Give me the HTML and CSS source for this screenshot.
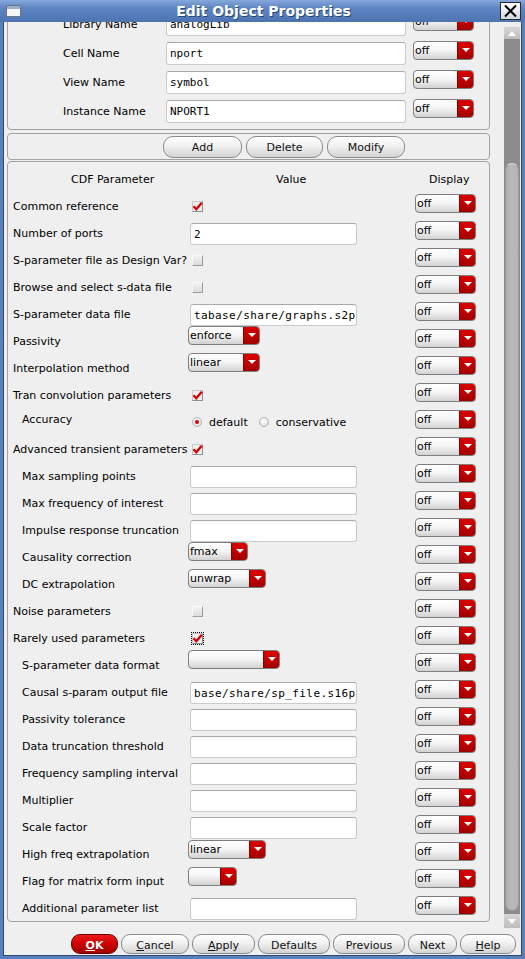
FILE: index.html
```html
<!DOCTYPE html>
<html>
<head>
<meta charset="utf-8">
<title>Edit Object Properties</title>
<link rel="stylesheet" href="styles.css">
</head>
<body>
<div class="window">
  <div class="titlebar">
    <span class="winicon">
      <svg width="15" height="12" viewBox="0 0 15 12"><rect x="0.5" y="0.5" width="14" height="11" fill="#f4f6f9" stroke="#6b7688"/><rect x="1" y="1" width="13" height="3" fill="#9aaecb"/></svg>
    </span>
    <span class="title">Edit Object Properties</span>
    <span class="closebtn">
      <svg width="21" height="18" viewBox="0 0 21 18"><defs><linearGradient id="cg" x1="0" y1="0" x2="0" y2="1"><stop offset="0" stop-color="#ffffff"/><stop offset="1" stop-color="#cfd6df"/></linearGradient></defs><rect x="0.5" y="0.5" width="20" height="17" fill="url(#cg)" stroke="#2b2b2b"/><path d="M5 3.5 L16 14.5 M16 3.5 L5 14.5" stroke="#000" stroke-width="2"/></svg>
    </span>
  </div>
  <div class="client">
    <div class="main">
      <div class="view">
        <div class="content">
          <section class="panel top-panel">
            <div class="trow"><span class="tlabel">Library Name</span><span class="field tfield">analogLib</span><span class="dd dd-disp"><span class="dd-text">off</span><span class="dd-arrow"></span></span></div>
            <div class="trow"><span class="tlabel">Cell Name</span><span class="field tfield">nport</span><span class="dd dd-disp"><span class="dd-text">off</span><span class="dd-arrow"></span></span></div>
            <div class="trow"><span class="tlabel">View Name</span><span class="field tfield">symbol</span><span class="dd dd-disp"><span class="dd-text">off</span><span class="dd-arrow"></span></span></div>
            <div class="trow"><span class="tlabel">Instance Name</span><span class="field tfield">NPORT1</span><span class="dd dd-disp"><span class="dd-text">off</span><span class="dd-arrow"></span></span></div>
          </section>
          <section class="panel btn-panel">
            <button class="btn btn-add">Add</button>
            <button class="btn btn-delete">Delete</button>
            <button class="btn btn-modify">Modify</button>
          </section>
          <section class="panel cdf-panel">
            <div class="crow head">
              <span class="h-param">CDF Parameter</span>
              <span class="h-value">Value</span>
              <span class="h-display">Display</span>
            </div>

            <div class="crow"><span class="clabel">Common reference</span><span class="cval"><span class="cb cb-on"><svg width="11" height="11" viewBox="0 0 11 11"><path d="M1.5 5.2 L4.3 8.2 L9.8 1.8" fill="none" stroke="#d60000" stroke-width="2.4"/></svg></span></span><span class="dd dd-disp"><span class="dd-text">off</span><span class="dd-arrow"></span></span></div>

            <div class="crow"><span class="clabel">Number of ports</span><span class="cval"><span class="field cfield">2</span></span><span class="dd dd-disp"><span class="dd-text">off</span><span class="dd-arrow"></span></span></div>

            <div class="crow"><span class="clabel">S-parameter file as Design Var?</span><span class="cval"><span class="cb"></span></span><span class="dd dd-disp"><span class="dd-text">off</span><span class="dd-arrow"></span></span></div>

            <div class="crow"><span class="clabel">Browse and select s-data file</span><span class="cval"><span class="cb"></span></span><span class="dd dd-disp"><span class="dd-text">off</span><span class="dd-arrow"></span></span></div>

            <div class="crow"><span class="clabel">S-parameter data file</span><span class="cval"><span class="field cfield path">tabase/share/graphs.s2p</span></span><span class="dd dd-disp"><span class="dd-text">off</span><span class="dd-arrow"></span></span></div>

            <div class="crow"><span class="clabel">Passivity</span><span class="cval"><span class="dd dd-val w-enforce"><span class="dd-text">enforce</span><span class="dd-arrow"></span></span></span><span class="dd dd-disp"><span class="dd-text">off</span><span class="dd-arrow"></span></span></div>

            <div class="crow"><span class="clabel">Interpolation method</span><span class="cval"><span class="dd dd-val w-enforce"><span class="dd-text">linear</span><span class="dd-arrow"></span></span></span><span class="dd dd-disp"><span class="dd-text">off</span><span class="dd-arrow"></span></span></div>

            <div class="crow"><span class="clabel">Tran convolution parameters</span><span class="cval"><span class="cb cb-on"><svg width="11" height="11" viewBox="0 0 11 11"><path d="M1.5 5.2 L4.3 8.2 L9.8 1.8" fill="none" stroke="#d60000" stroke-width="2.4"/></svg></span></span><span class="dd dd-disp"><span class="dd-text">off</span><span class="dd-arrow"></span></span></div>

            <div class="crow"><span class="clabel ind flat">Accuracy</span><span class="cval radios"><span class="radio on"></span><span class="rtext">default</span><span class="radio"></span><span class="rtext">conservative</span></span><span class="dd dd-disp"><span class="dd-text">off</span><span class="dd-arrow"></span></span></div>

            <div class="crow"><span class="clabel">Advanced transient parameters</span><span class="cval cval-tight"><span class="cb cb-on"><svg width="11" height="11" viewBox="0 0 11 11"><path d="M1.5 5.2 L4.3 8.2 L9.8 1.8" fill="none" stroke="#d60000" stroke-width="2.4"/></svg></span></span><span class="dd dd-disp"><span class="dd-text">off</span><span class="dd-arrow"></span></span></div>

            <div class="crow"><span class="clabel ind">Max sampling points</span><span class="cval"><span class="field cfield"></span></span><span class="dd dd-disp"><span class="dd-text">off</span><span class="dd-arrow"></span></span></div>

            <div class="crow"><span class="clabel ind">Max frequency of interest</span><span class="cval"><span class="field cfield"></span></span><span class="dd dd-disp"><span class="dd-text">off</span><span class="dd-arrow"></span></span></div>

            <div class="crow"><span class="clabel ind">Impulse response truncation</span><span class="cval"><span class="field cfield"></span></span><span class="dd dd-disp"><span class="dd-text">off</span><span class="dd-arrow"></span></span></div>

            <div class="crow"><span class="clabel ind">Causality correction</span><span class="cval"><span class="dd dd-val w-fmax"><span class="dd-text">fmax</span><span class="dd-arrow"></span></span></span><span class="dd dd-disp"><span class="dd-text">off</span><span class="dd-arrow"></span></span></div>

            <div class="crow"><span class="clabel ind">DC extrapolation</span><span class="cval"><span class="dd dd-val w-unwrap"><span class="dd-text">unwrap</span><span class="dd-arrow"></span></span></span><span class="dd dd-disp"><span class="dd-text">off</span><span class="dd-arrow"></span></span></div>

            <div class="crow"><span class="clabel">Noise parameters</span><span class="cval"><span class="cb"></span></span><span class="dd dd-disp"><span class="dd-text">off</span><span class="dd-arrow"></span></span></div>

            <div class="crow"><span class="clabel">Rarely used parameters</span><span class="cval"><span class="cb cb-on cb-focus"><svg width="11" height="11" viewBox="0 0 11 11"><path d="M1.5 5.2 L4.3 8.2 L9.8 1.8" fill="none" stroke="#d60000" stroke-width="2.4"/></svg></span></span><span class="dd dd-disp"><span class="dd-text">off</span><span class="dd-arrow"></span></span></div>

            <div class="crow"><span class="clabel ind">S-parameter data format</span><span class="cval"><span class="dd dd-val w-format"><span class="dd-text"></span><span class="dd-arrow"></span></span></span><span class="dd dd-disp"><span class="dd-text">off</span><span class="dd-arrow"></span></span></div>

            <div class="crow"><span class="clabel ind">Causal s-param output file</span><span class="cval"><span class="field cfield path">base/share/sp_file.s16p</span></span><span class="dd dd-disp"><span class="dd-text">off</span><span class="dd-arrow"></span></span></div>

            <div class="crow"><span class="clabel ind">Passivity tolerance</span><span class="cval"><span class="field cfield"></span></span><span class="dd dd-disp"><span class="dd-text">off</span><span class="dd-arrow"></span></span></div>

            <div class="crow"><span class="clabel ind">Data truncation threshold</span><span class="cval"><span class="field cfield"></span></span><span class="dd dd-disp"><span class="dd-text">off</span><span class="dd-arrow"></span></span></div>

            <div class="crow"><span class="clabel ind">Frequency sampling interval</span><span class="cval"><span class="field cfield"></span></span><span class="dd dd-disp"><span class="dd-text">off</span><span class="dd-arrow"></span></span></div>

            <div class="crow"><span class="clabel ind">Multiplier</span><span class="cval"><span class="field cfield"></span></span><span class="dd dd-disp"><span class="dd-text">off</span><span class="dd-arrow"></span></span></div>

            <div class="crow"><span class="clabel ind">Scale factor</span><span class="cval"><span class="field cfield"></span></span><span class="dd dd-disp"><span class="dd-text">off</span><span class="dd-arrow"></span></span></div>

            <div class="crow"><span class="clabel ind">High freq extrapolation</span><span class="cval"><span class="dd dd-val w-unwrap low"><span class="dd-text">linear</span><span class="dd-arrow"></span></span></span><span class="dd dd-disp"><span class="dd-text">off</span><span class="dd-arrow"></span></span></div>

            <div class="crow"><span class="clabel ind">Flag for matrix form input</span><span class="cval"><span class="dd dd-val w-flag low"><span class="dd-text"></span><span class="dd-arrow"></span></span></span><span class="dd dd-disp"><span class="dd-text">off</span><span class="dd-arrow"></span></span></div>

            <div class="crow"><span class="clabel ind">Additional parameter list</span><span class="cval"><span class="field cfield"></span></span><span class="dd dd-disp"><span class="dd-text">off</span><span class="dd-arrow"></span></span></div>
          </section>
        </div>
      </div>
      <div class="scrollbar">
        <div class="sb-btn sb-up"><span class="tri-up"></span></div>
        <div class="sb-track"><div class="sb-thumb"></div></div>
        <div class="sb-btn sb-down"><span class="tri-down"></span></div>
      </div>
    </div>
    <div class="buttonbar">
      <button class="btn bb bb-ok"><u>O</u>K</button>
      <button class="btn bb bb-cancel"><u>C</u>ancel</button>
      <button class="btn bb bb-apply"><u>A</u>pply</button>
      <button class="btn bb bb-defaults">Defaults</button>
      <button class="btn bb bb-previous">Previous</button>
      <button class="btn bb bb-next">Next</button>
      <button class="btn bb bb-help"><u>H</u>elp</button>
    </div>
  </div>
</div>
</body>
</html>
```
FILE: styles.css
```css
html, body {
  margin: 0;
  padding: 0;
}
body {
  width: 525px;
  height: 959px;
  overflow: hidden;
  font-family: "DejaVu Sans", "Liberation Sans", sans-serif;
  font-size: 11px;
  color: #000;
}
.window {
  width: 525px;
  height: 959px;
  display: flex;
  flex-direction: column;
  background: #5a80bc;
}
.titlebar {
  height: 22px;
  flex: none;
  position: relative;
  display: flex;
  align-items: center;
  justify-content: center;
  background: linear-gradient(to bottom, #86a9dc 0%, #5f86c2 35%, #4d74b1 100%);
}
.winicon {
  position: absolute;
  left: 6px;
  top: 5px;
  width: 15px;
  height: 12px;
  display: block;
}
.winicon svg, .closebtn svg { display: block; }
.title {
  color: #fff;
  font-weight: bold;
  font-size: 14px;
  line-height: 22px;
  text-shadow: 1px 1px 0 #27467a;
  padding-left: 2px;
}
.closebtn {
  position: absolute;
  left: 500px;
  top: 2px;
  width: 21px;
  height: 18px;
}
.client {
  flex: 1;
  display: flex;
  flex-direction: column;
  margin: 0 3px 3px 3px;
  border-left: 1px solid #2b4877;
  border-right: 1px solid #2b4877;
  border-bottom: 1px solid #2b4877;
  background: #efefef;
  min-height: 0;
}
.main {
  height: 908px;
  flex: none;
  display: flex;
}
.view {
  width: 499px;
  height: 908px;
  overflow: hidden;
  padding-left: 3px;
  box-sizing: border-box;
}
.content {
  margin-top: -17px;
  width: 483px;
}
.panel {
  border: 1px solid #a2a2a2;
  border-radius: 4px;
  background: #efefef;
}
.top-panel {
  padding: 4px 0 3px 0;
}
.trow {
  height: 29px;
  display: flex;
  align-items: flex-start;
}
.tlabel {
  width: 158px;
  box-sizing: border-box;
  padding-left: 55px;
  line-height: 30px;
  white-space: nowrap;
}
.field {
  display: block;
  box-sizing: border-box;
  background: #fff;
  border: 1px solid #cacaca;
  border-top-color: #a9a9a9;
  border-radius: 3px;
  font-family: "DejaVu Sans Mono", "Liberation Mono", monospace;
  font-size: 11px;
  padding-left: 3px;
  white-space: nowrap;
  overflow: hidden;
}
.tfield {
  width: 240px;
  height: 23px;
  line-height: 22px;
  margin-top: 3px;
  margin-right: 7px;
}
.cfield {
  width: 167px;
  height: 22px;
  line-height: 21px;
  margin-left: 2px;
  margin-top: 6px;
}
.cfield.path { letter-spacing: 0.4px; }

.dd {
  display: flex;
  height: 19px;
  box-sizing: border-box;
  border: 1px solid #7e7e7e;
  border-radius: 4px;
  overflow: hidden;
  background: linear-gradient(to bottom, #ffffff 0%, #f6f6f6 45%, #d2d2d2 100%);
}
.dd-text {
  flex: 1;
  padding-left: 1px;
  line-height: 18px;
  white-space: nowrap;
  overflow: hidden;
}
.dd-arrow {
  width: 16px;
  flex: none;
  display: flex;
  align-items: center;
  justify-content: center;
  padding-bottom: 2px;
  box-sizing: border-box;
  background: linear-gradient(to bottom, #dc0000 0%, #c20000 50%, #a00000 100%);
  border-left: 1px solid #8c0000;
}
.dd-arrow::after {
  content: "";
  width: 0;
  height: 0;
  border-left: 4px solid transparent;
  border-right: 4px solid transparent;
  border-top: 4px solid #fff;
}
.dd-disp {
  width: 61px;
  margin-top: 4px;
}
.trow .dd-disp {
  margin-top: 2px;
}
.dd-val { margin-top: 1px; }
.dd-val.low { margin-top: 2px; }
.w-enforce { width: 72px; }
.w-fmax { width: 60px; }
.w-unwrap { width: 78px; }
.w-format { width: 92px; }
.w-flag { width: 49px; }

.btn-panel {
  margin-top: 3px;
  padding: 2px 0 1px 155px;
  display: flex;
  gap: 4px;
}
.btn {
  box-sizing: border-box;
  height: 22px;
  padding: 0;
  margin: 0;
  border: 1px solid #8b8b8b;
  border-radius: 10px;
  background: linear-gradient(to bottom, #ffffff 0%, #f1f1f1 45%, #d3d3d3 100%);
  font-family: "DejaVu Sans", "Liberation Sans", sans-serif;
  font-size: 11px;
  color: #111;
  display: flex;
  align-items: center;
  justify-content: center;
  line-height: 1;
  padding-top: 1px;
}
.btn-add { width: 79px; }
.btn-delete { width: 77px; }
.btn-modify { width: 78px; }

.cdf-panel {
  margin-top: 1px;
  padding-bottom: 2px;
}
.crow {
  height: 27px;
  display: flex;
  align-items: flex-start;
}
.crow.head {
  height: 28px;
}
.h-param, .h-value, .h-display {
  display: block;
  box-sizing: border-box;
  padding-top: 11px;
  line-height: 14px;
}
.h-param { width: 180px; padding-left: 63px; }
.h-value { width: 227px; padding-left: 88px; }
.h-display { width: 61px; padding-left: 14px; }

.clabel {
  width: 180px;
  box-sizing: border-box;
  padding-left: 5px;
  line-height: 27px;
  margin-top: 3px;
  white-space: nowrap;
}
.clabel.ind { padding-left: 14px; }
.clabel.flat { margin-top: 0; }
.cval {
  width: 227px;
  height: 27px;
  display: flex;
  align-items: flex-start;
}
.cb {
  display: block;
  width: 11px;
  height: 11px;
  box-sizing: border-box;
  margin-left: 4px;
  margin-top: 11px;
  border: 1px solid;
  border-color: #f8f8f8 #9c9c9c #9c9c9c #f8f8f8;
  background: linear-gradient(to bottom, #f2f2f2, #dcdcdc);
  position: relative;
}
.cb svg {
  position: absolute;
  left: -1px;
  top: -1px;
}
.cb-on {
  border-color: #c9c9c9 #8f8f8f #8f8f8f #c9c9c9;
  background: #f0f0f0;
}
.cb-focus {
  outline: 1px dotted #000;
  outline-offset: 0;
}
.radios { align-items: flex-start; }
.radio {
  display: block;
  width: 10px;
  height: 10px;
  box-sizing: border-box;
  border-radius: 50%;
  margin-top: 11px;
  border: 1px solid #b4b4b4;
  background: radial-gradient(circle at 40% 35%, #ffffff 0%, #e8e8e8 60%, #cfcfcf 100%);
  position: relative;
}
.radio:first-child { margin-left: 4px; }
.radio.on::after {
  content: "";
  position: absolute;
  left: 2px;
  top: 2px;
  width: 4px;
  height: 4px;
  border-radius: 50%;
  background: #d20000;
}
.rtext {
  line-height: 27px;
  margin-top: 3px;
  margin-left: 7px;
  margin-right: 11px;
}

.scrollbar {
  width: 16px;
  height: 908px;
  margin-left: 1px;
  display: flex;
  flex-direction: column;
  background: #8c8c8c;
}
.sb-btn {
  flex: none;
  display: flex;
  align-items: center;
  justify-content: center;
  background: linear-gradient(to bottom, #d6d6d6, #bcbcbc);
  box-sizing: border-box;
}
.sb-up {
  height: 18px;
  border-top: 5px solid #efefef;
  border-bottom: 1px solid #8a8a8a;
}
.sb-down {
  height: 17px;
  border-top: 1px solid #8a8a8a;
  border-bottom: 2px solid #efefef;
}
.tri-up, .tri-down {
  width: 0;
  height: 0;
  border-left: 4px solid transparent;
  border-right: 4px solid transparent;
}
.tri-up { border-bottom: 5px solid #fff; }
.tri-down { border-top: 5px solid #fff; }
.sb-track {
  flex: 1;
  display: flex;
  flex-direction: column;
  padding: 0 1px;
}
.sb-thumb {
  margin-top: 123px;
  height: 748px;
  border-radius: 7px;
  box-sizing: border-box;
  border: 1px solid #9a9a9a;
  border-top-color: #d8d8d8;
  background: linear-gradient(to right, #b0b0b0, #bababa 50%, #b2b2b2);
}

.buttonbar {
  flex: 1;
  display: flex;
  justify-content: flex-end;
  align-items: flex-start;
  gap: 3px;
  padding-top: 4px;
  padding-right: 5px;
}
.bb {
  height: 20px;
  border-radius: 9px;
  padding-top: 3px;
}
.bb-ok {
  width: 47px;
  color: #fff;
  font-weight: bold;
  border-color: #6e0000;
  background: linear-gradient(to bottom, #ee1a1a 0%, #cc0000 50%, #a00000 100%);
}
.bb-cancel { width: 68px; }
.bb-apply { width: 63px; }
.bb-defaults { width: 72px; }
.bb-previous { width: 72px; }
.bb-next { width: 49px; }
.bb-help { width: 56px; }
```
